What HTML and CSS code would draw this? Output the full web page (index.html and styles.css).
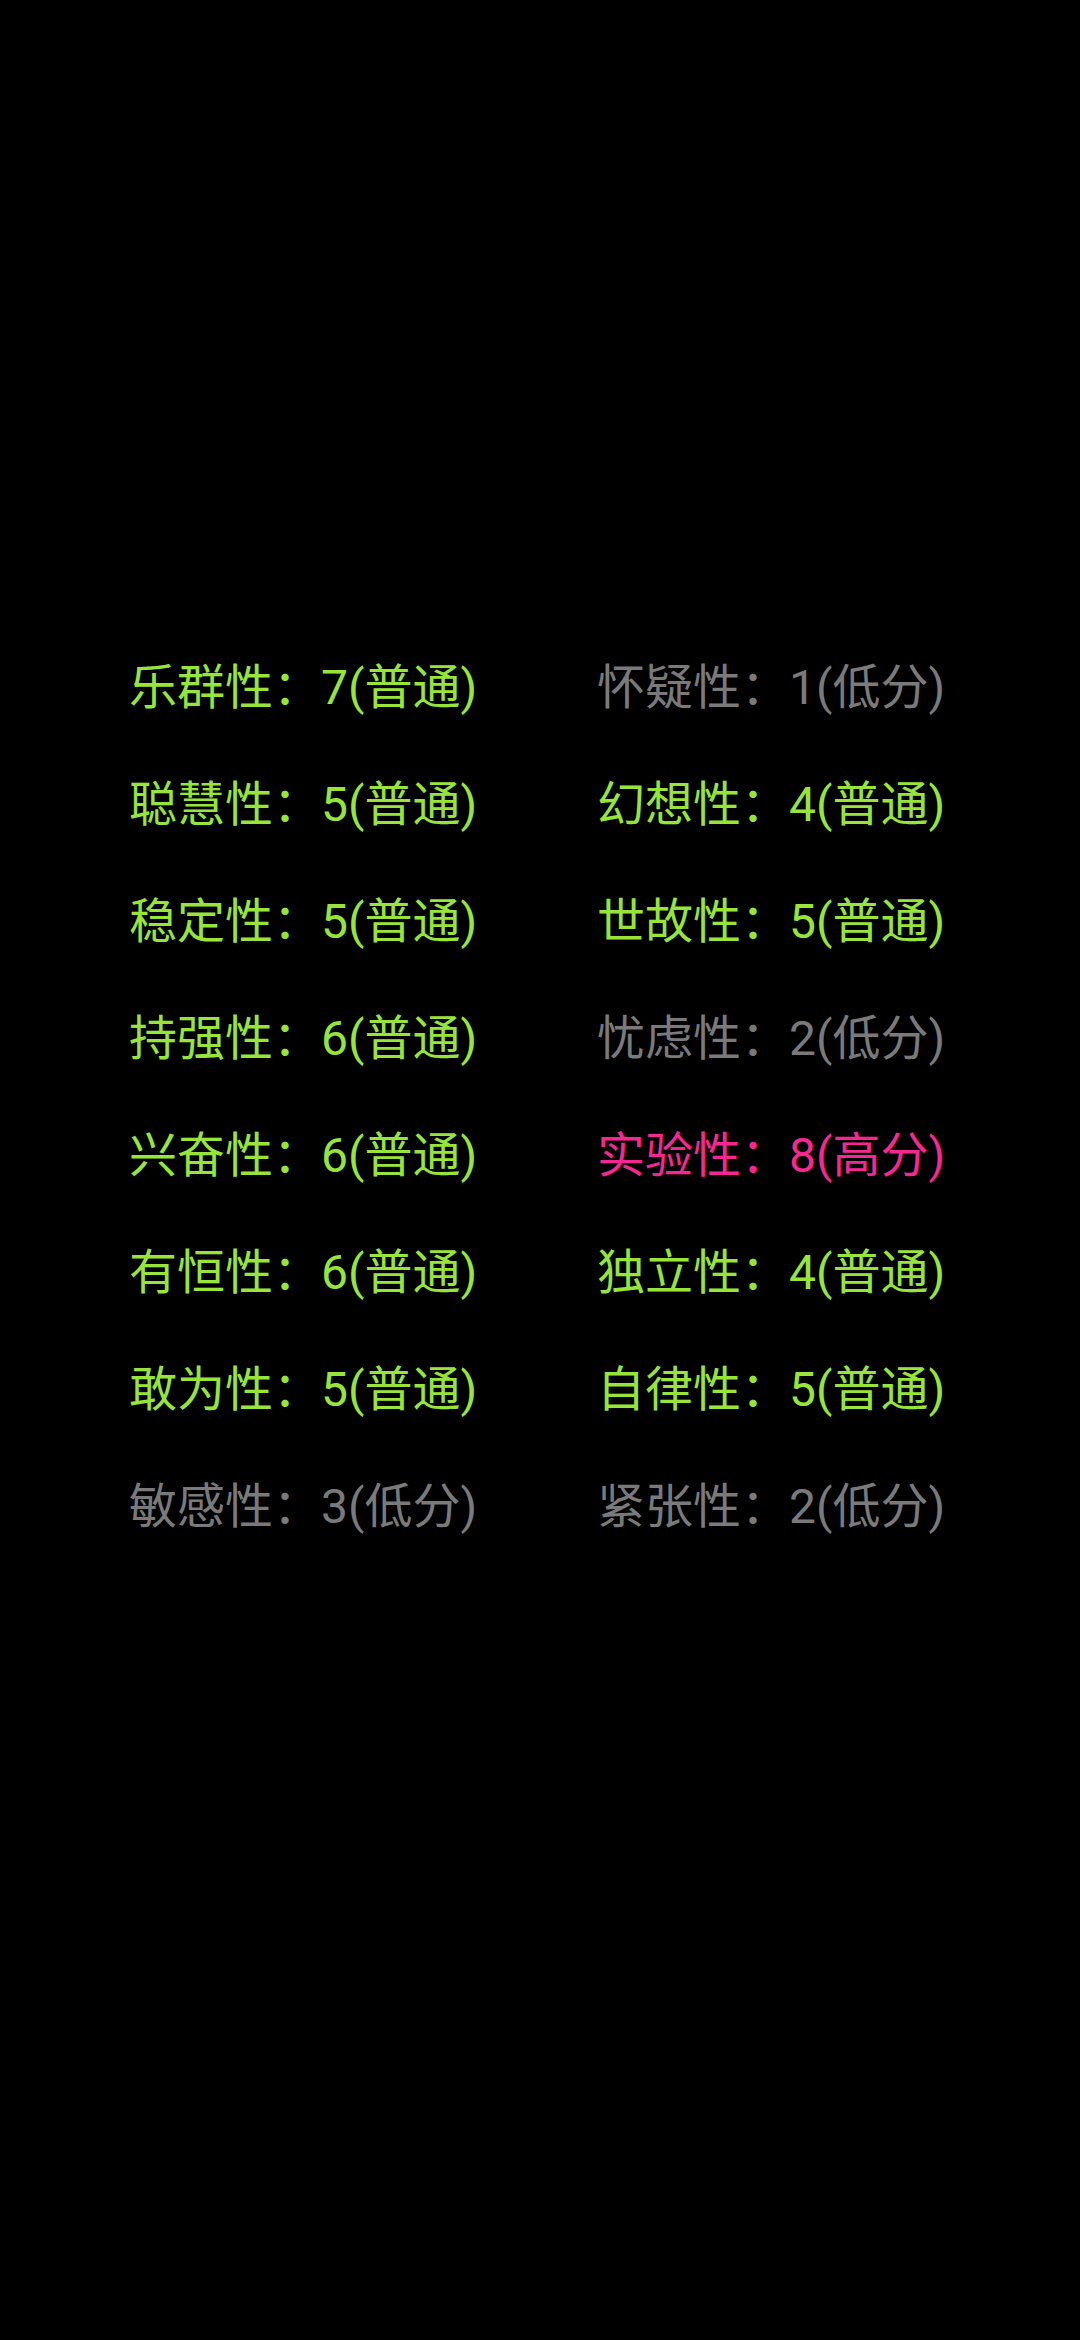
FILE: index.html
```html
<!DOCTYPE html>
<html lang="zh">
<head>
<meta charset="utf-8">
<link rel="stylesheet" href="styles.css">
</head>
<body>
<div class="page">
  <div class="grid">
    <div class="item normal">乐群性：7(普通)</div>
    <div class="item low">怀疑性：1(低分)</div>
    <div class="item normal">聪慧性：5(普通)</div>
    <div class="item normal">幻想性：4(普通)</div>
    <div class="item normal">稳定性：5(普通)</div>
    <div class="item normal">世故性：5(普通)</div>
    <div class="item normal">持强性：6(普通)</div>
    <div class="item low">忧虑性：2(低分)</div>
    <div class="item normal">兴奋性：6(普通)</div>
    <div class="item high">实验性：8(高分)</div>
    <div class="item normal">有恒性：6(普通)</div>
    <div class="item normal">独立性：4(普通)</div>
    <div class="item normal">敢为性：5(普通)</div>
    <div class="item normal">自律性：5(普通)</div>
    <div class="item low">敏感性：3(低分)</div>
    <div class="item low">紧张性：2(低分)</div>
  </div>
</div>
</body>
</html>
```

FILE: styles.css
```css
html, body {
  margin: 0;
  padding: 0;
  background: #000;
}
.page {
  width: 1080px;
  height: 2340px;
  background: #000;
  box-sizing: border-box;
  padding-top: 629px;
  padding-left: 129px;
}
.grid {
  display: grid;
  grid-template-columns: 468px auto;
}
.item {
  font-family: Roboto, "Noto Sans CJK SC", sans-serif;
  font-size: 48px;
  line-height: 117px;
  height: 117px;
  white-space: nowrap;
}
.normal { color: #97e53a; }
.low { color: #7a7a7a; }
.high { color: #f52790; }
```
